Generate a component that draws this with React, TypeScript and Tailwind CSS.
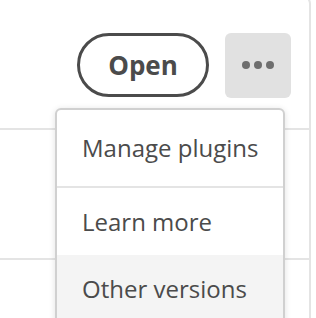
import React from "react";

const items = [
  { label: "Manage plugins", divider: true },
  { label: "Learn more" },
  { label: "Other versions", active: true },
];

export default function App() {
  return (
    <div className="relative h-[318px] w-[316px] overflow-hidden bg-white font-['Open_Sans',sans-serif] text-[#4b4b4b]">
      <div className="-mt-[6px] h-[400px] w-[311px] rounded-tr-[10px] border-t-2 border-r-2 border-[#e4e4e4]">
        <div className="flex h-[134px] items-center justify-end gap-4 border-b-2 border-[#e4e4e4] pt-[6px] pr-[18px]">
          <button className="flex h-16 w-[132px] items-center justify-center rounded-full border-[3px] border-[#4b4b4b] text-[26px] font-bold leading-none">
            Open
          </button>
          <button className="flex h-[65px] w-[66px] items-center justify-center gap-1 rounded-md bg-[#e1e1e1]">
            <span className="h-2 w-2 rounded-full bg-[#6e6e6e]" />
            <span className="h-2 w-2 rounded-full bg-[#6e6e6e]" />
            <span className="h-2 w-2 rounded-full bg-[#6e6e6e]" />
          </button>
        </div>
        <div className="h-[130px] border-b-2 border-[#e4e4e4]" />
      </div>

      {/* dropdown menu */}
      <div className="absolute top-[108px] left-[55px] w-[230px] overflow-hidden rounded-t-md border-2 border-[#d0d0d0] bg-white shadow-[0_1px_6px_rgba(0,0,0,0.12)]">
        {items.map((item) => (
          <div key={item.label}>
            <div
              className={`flex h-[67px] items-center pl-[25px] text-[24px] leading-none ${
                item.active ? "bg-[#f4f4f4]" : ""
              } ${item.label === "Manage plugins" ? "h-[76px]" : ""}`}
            >
              {item.label}
            </div>
            {item.divider ? <div className="h-[2px] bg-[#e4e4e4]" /> : null}
          </div>
        ))}
      </div>
    </div>
  );
}
